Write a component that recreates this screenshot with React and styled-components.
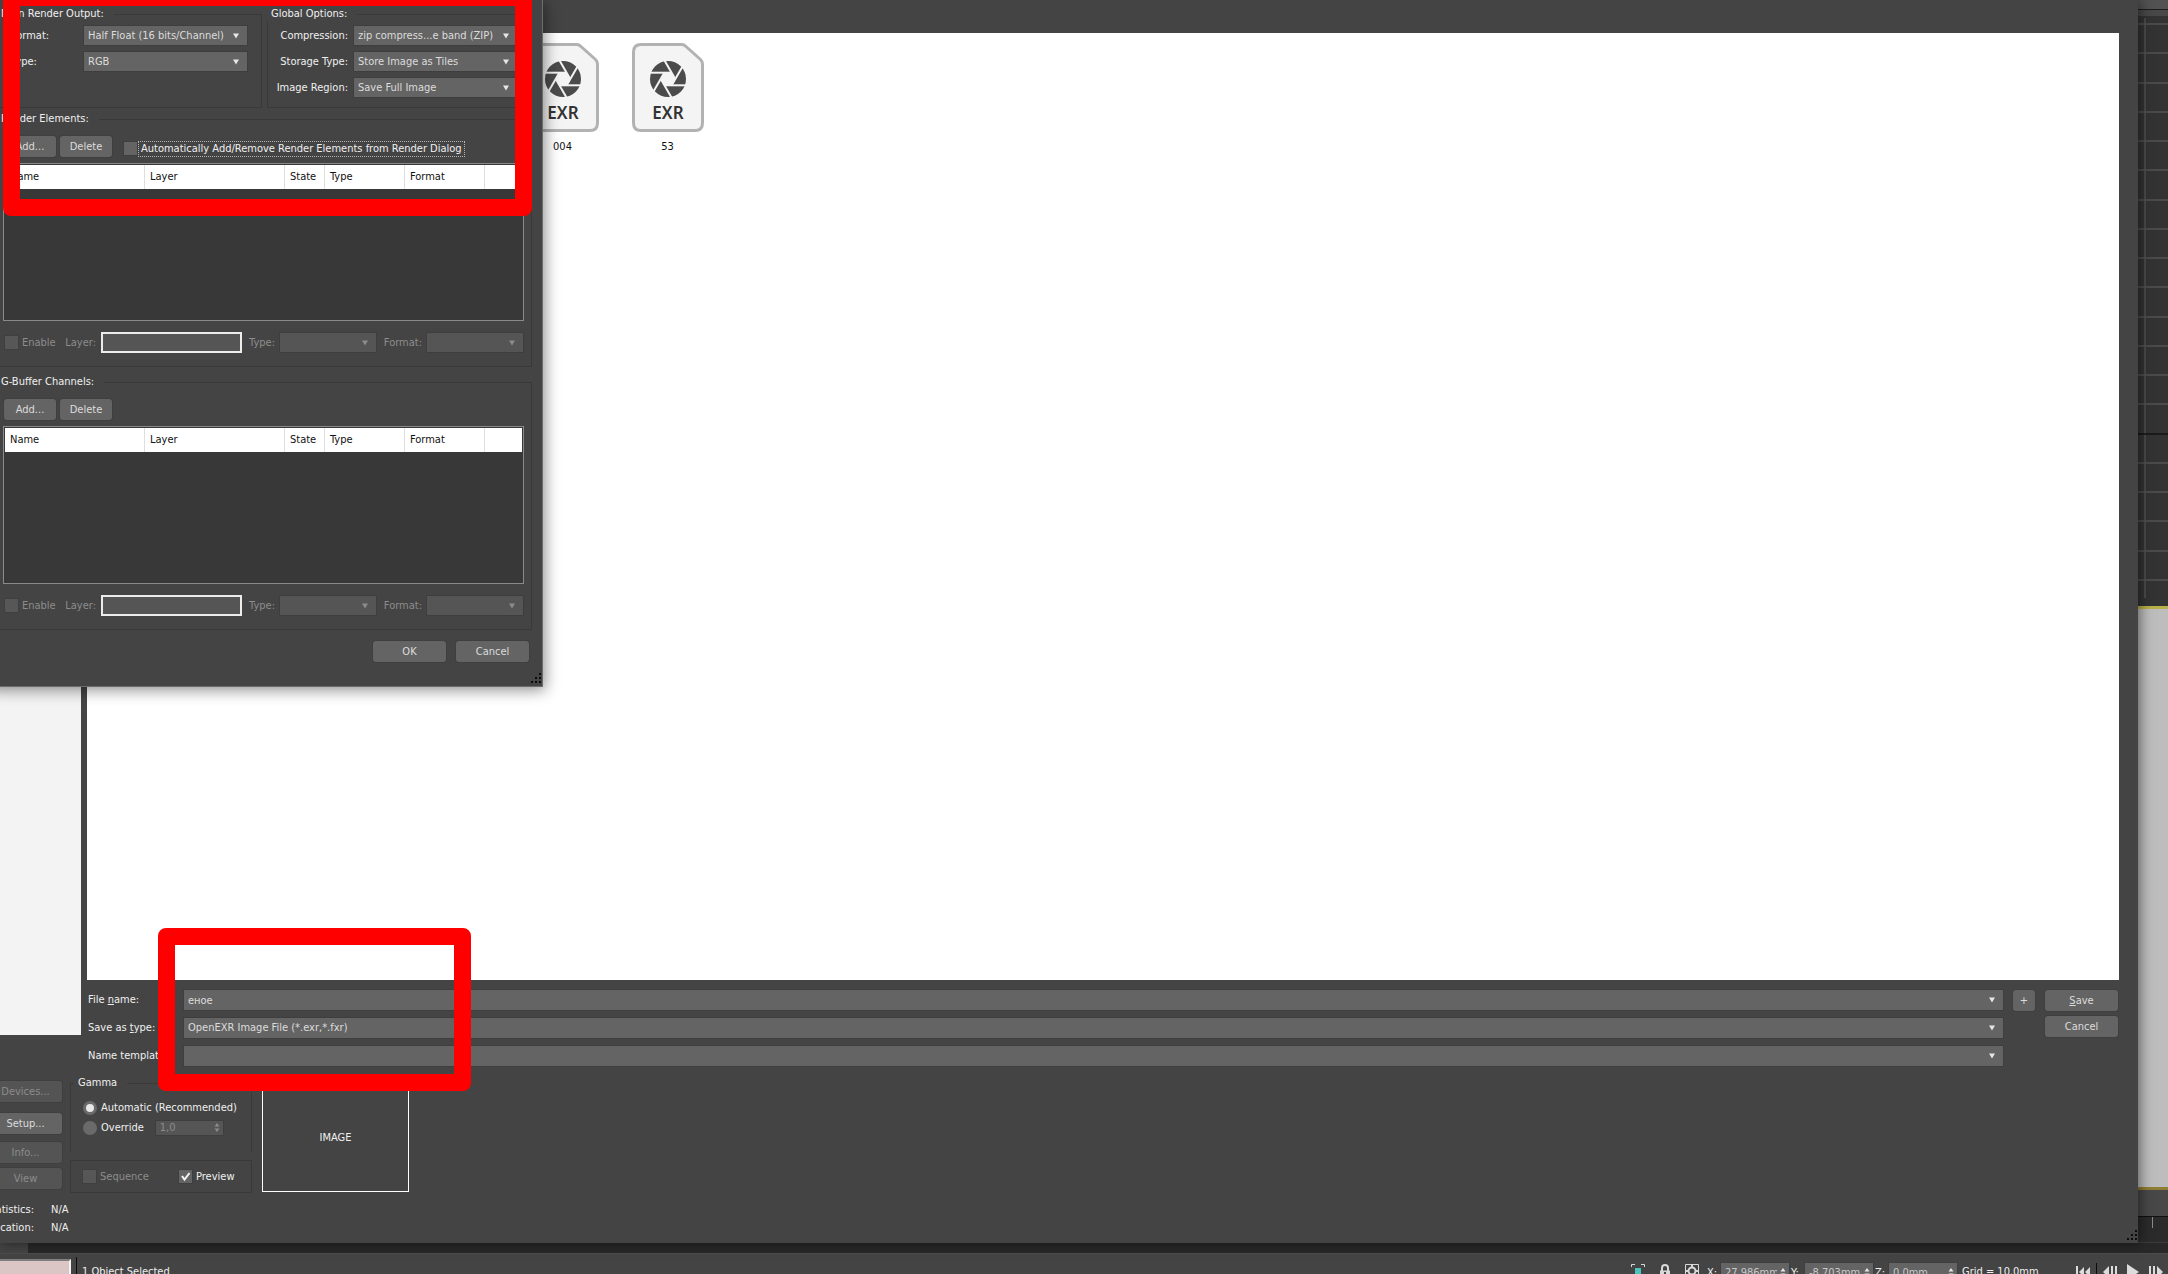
import React, { useState } from "react";
import styled, { createGlobalStyle, css } from "styled-components";

const GlobalStyle = createGlobalStyle`
  * {
    box-sizing: border-box;
  }

  body {
    margin: 0;
    background: #444444;
    color: #f0f0f0;
    overflow: hidden;
  }

  body, button, input, select, table {
    font-family: "DejaVu Sans Condensed", "DejaVu Sans", sans-serif;
    font-stretch: condensed;
    font-size: 11px;
    line-height: 14px;
  }
`;

const Screen = styled.div`
  position: relative;
  display: flex;
  flex-direction: column;
  height: 100vh;
  overflow: hidden;
`;

const Workspace = styled.div`
  display: flex;
  flex: 1;
  min-height: 0;
`;

/* shared controls */

const Button = styled.button`
  width: ${(p) => p.$width || 52}px;
  height: 21px;
  padding: 0;
  border: none;
  border-radius: 3px;
  background: #646464;
  box-shadow: 0 0 0 1px #3f3f3f;
  color: #dcdcdc;

  &:disabled {
    background: #545454;
    color: #8c8c8c;
  }
`;

const ComboWrap = styled.div`
  display: grid;
  height: ${(p) => p.$height || 19}px;
`;

const comboField = css`
  grid-area: 1 / 1;
  width: 100%;
  min-width: 0;
  height: 100%;
  margin: 0;
  padding: 0 20px 0 4px;
  border: none;
  border-radius: 0;
  background: #646464;
  box-shadow: 0 0 0 1px #3e3e3e;
  color: #dcdcdc;
  outline: none;
  appearance: none;

  &:disabled {
    background: #555555;
    opacity: 1;
  }
`;

const SelectField = styled.select`
  ${comboField}
`;

const ComboInput = styled.input`
  ${comboField}
`;

const Arrow = styled.svg`
  grid-area: 1 / 1;
  z-index: 1;
  align-self: center;
  justify-self: end;
  width: 6px;
  height: 6px;
  margin-right: 8px;
  fill: ${(p) => (p.$dim ? "#8c8c8c" : "#e6e6e6")};
  pointer-events: none;
`;

const TextField = styled.input`
  width: 100%;
  min-width: 0;
  height: 21px;
  padding: 0 4px;
  border: 2px solid #ececec;
  background: #555555;
  color: #dcdcdc;
`;

const CheckLabel = styled.label`
  display: flex;
  align-items: center;
  gap: ${(p) => p.$gap || 4}px;
  white-space: nowrap;
  color: ${(p) => (p.$dim ? "#8c8c8c" : "#f0f0f0")};
`;

const TickBox = styled.span`
  display: grid;
  width: 13px;
  height: 13px;
`;

const TickInput = styled.input`
  grid-area: 1 / 1;
  width: 13px;
  height: 13px;
  margin: 0;
  border: none;
  background: #646464;
  box-shadow: 0 0 0 1px #3f3f3f;
  appearance: none;

  &:disabled {
    background: #575757;
  }
`;

const TickMark = styled.svg`
  grid-area: 1 / 1;
  width: 13px;
  height: 13px;
  pointer-events: none;
`;

const FocusText = styled.span`
  padding: 0 2px;
  outline: ${(p) => (p.$focus ? "1px dotted #b4b4b4" : "none")};
`;

const RadioInput = styled.input`
  width: 14px;
  height: 14px;
  margin: 0;
  border: 3px solid #6a6a6a;
  border-radius: 50%;
  background: #6a6a6a;
  appearance: none;

  &:checked {
    background: #e8e8e8;
  }
`;

const Group = styled.fieldset`
  min-width: 0;
  margin: 0;
  padding: ${(p) => p.$pad || "5px 6px 10px 5px"};
  border: 1px solid #393939;
  border-bottom-color: ${(p) => (p.$open ? "transparent" : "#393939")};
`;

const GroupTitle = styled.legend`
  height: 14px;
  margin-left: ${(p) => (p.$wide ? -9 : -6)}px;
  padding: 0 10px 0 4px;
`;

const Label = styled.label`
  color: ${(p) => (p.$dim ? "#8c8c8c" : "#f0f0f0")};
  white-space: nowrap;
`;

/* OpenEXR settings window */

const SettingsWindow = styled.section`
  position: absolute;
  top: 0;
  left: -13px;
  z-index: 5;
  display: flex;
  flex-direction: column;
  width: 556px;
  padding: 7px 10px 24px;
  border-right: 1px solid #6c6c6c;
  border-bottom: 1px solid #6c6c6c;
  background: #444444;
  box-shadow: 2px 3px 14px rgba(0, 0, 0, 0.45);
`;

const OptionColumns = styled.div`
  display: grid;
  grid-template-columns: 1fr 1fr;
  gap: 5px;
  margin-bottom: 4px;
`;

const OptionGrid = styled.div`
  display: grid;
  grid-template-columns: 75px 163px;
  grid-auto-rows: 19px;
  align-items: center;
  gap: 7px 6px;
`;

const LeftLabel = styled(Label)`
  padding-left: 8px;
`;

const RightLabel = styled(Label)`
  text-align: right;
`;

const ChannelGroup = styled(Group)`
  margin-bottom: 8px;
`;

const ButtonRow = styled.div`
  display: flex;
  align-items: center;
  gap: 4px;
  height: 21px;
  margin-bottom: 6px;
  padding-left: 1px;
`;

const AutoCheck = styled.div`
  margin-left: 8px;
  padding-top: 4px;
`;

const ListFrame = styled.div`
  height: 158px;
  margin-bottom: 11px;
  padding: 1px;
  border: 1px solid #8a8a8a;
  background: #383838;
`;

const List = styled.table`
  width: 100%;
  table-layout: fixed;
  border-collapse: separate;
  border-spacing: 0;
`;

const ListHead = styled.th`
  width: ${(p) => (p.$width ? p.$width + "px" : "auto")};
  height: 24px;
  padding: 0 0 0 5px;
  border-right: ${(p) => (p.$width ? "1px solid #dedede" : "none")};
  background: #ffffff;
  color: #111111;
  font-weight: normal;
  text-align: left;
`;

const DetailRow = styled.div`
  display: grid;
  grid-template-columns: 60px 36px 141px 38px 96px 51px 96px;
  align-items: center;
  padding-left: 2px;

  > ${Label} {
    padding-right: 5px;
    text-align: right;
  }
`;

const DialogButtons = styled.div`
  display: flex;
  justify-content: flex-end;
  gap: 10px;
  margin: 3px 3px 0 0;
`;

const Grip = styled.svg`
  position: absolute;
  right: 0;
  bottom: 2px;
  width: 11px;
  height: 11px;
  fill: #0c0c0c;
`;

/* save dialog */

const SaveWindow = styled.main`
  position: relative;
  z-index: 2;
  display: flex;
  flex: 1;
  flex-direction: column;
  min-width: 0;
  background: #444444;
  box-shadow: 2px 0 12px rgba(0, 0, 0, 0.5);
`;

const Browser = styled.div`
  display: flex;
  flex: 1;
  gap: 6px;
  min-height: 0;
  padding-right: 19px;
`;

const Places = styled.aside`
  width: 81px;
  margin-bottom: 31px;
  background: #f3f3f3;
`;

const BrowserMain = styled.div`
  display: flex;
  flex: 1;
  flex-direction: column;
  min-width: 0;
  padding-top: 33px;
`;

const FileArea = styled.ul`
  display: grid;
  flex: 1;
  grid-template-columns: repeat(auto-fill, 105px);
  align-content: start;
  margin: 0;
  padding: 10px 3px;
  background: #ffffff;
  list-style: none;
`;

const FileItem = styled.li`
  display: flex;
  flex-direction: column;
  align-items: center;
  gap: 8px;
  color: #111111;

  &:first-child {
    grid-column-start: 5;
  }
`;

const FileForm = styled.form`
  display: flex;
  align-items: flex-start;
  gap: 10px;
  padding: 10px 0 0 1px;
`;

const Fields = styled.div`
  display: grid;
  flex: 1;
  grid-template-columns: 96px 1fr;
  grid-auto-rows: 20px;
  align-items: center;
  row-gap: 8px;
`;

const FormButtons = styled.div`
  display: flex;
  flex-direction: column;
  gap: 5px;
  padding-right: 1px;
`;

const Footer = styled.div`
  display: flex;
  align-items: flex-start;
  height: 177px;
  padding-top: 10px;
  overflow: hidden;
`;

const SideColumn = styled.div`
  width: 81px;
  margin-left: -11px;
  padding-top: 5px;
`;

const ButtonStack = styled.div`
  display: flex;
  flex-direction: column;
  gap: ${(p) => p.$gap}px;
`;

const Stats = styled.dl`
  display: grid;
  grid-template-columns: 45px auto;
  gap: 4px 17px;
  margin: 14px 0 0;
`;

const StatName = styled.dt`
  display: flex;
  justify-content: flex-end;
`;

const StatValue = styled.dd`
  margin: 0;
`;

const GammaColumn = styled.div`
  display: flex;
  flex-direction: column;
  gap: 7px;
  width: 182px;
`;

const RadioList = styled.div`
  display: flex;
  flex-direction: column;
  gap: 5px;
`;

const RadioRow = styled.div`
  display: flex;
  align-items: center;
  gap: 12px;
  height: 15px;
`;

const SpinWrap = styled.div`
  display: grid;
  width: ${(p) => p.$width}px;
  height: ${(p) => p.$height}px;
`;

const SpinField = styled.input`
  ${comboField}
  padding-right: 12px;
  color: ${(p) => (p.disabled ? "#8c8c8c" : "#c8c8c8")};
`;

const SpinArrows = styled(Arrow)`
  height: 9px;
  margin-right: 3px;
`;

const ToggleBox = styled.div`
  display: grid;
  grid-template-columns: 96px auto;
  align-items: center;
  height: 33px;
  padding: 0 12px;
  border: 1px solid #393939;
`;

const ImagePreview = styled.div`
  display: flex;
  align-items: center;
  justify-content: center;
  width: 147px;
  height: 109px;
  margin: 7px 0 0 10px;
  border: 1px solid #ffffff;
`;

/* application behind the dialogs */

const Viewports = styled.div`
  display: flex;
  flex-direction: column;
  width: 30px;
  background: #484848;
`;

const ViewToolbar = styled.div`
  height: 10px;
  margin-bottom: 6px;
  border-bottom: 1px solid #1c1c1c;
  background: #525252;
`;

const WireView = styled.svg`
  width: 100%;
  height: 590px;
  background: #333333;
`;

const ShadedView = styled.div`
  flex: 1;
  border-top: 3px solid #b9b04a;
  border-bottom: 3px solid #8f7d33;
  background: #bdbdbd;
`;

const TimeTrack = styled.div`
  height: 27px;
  margin-top: 26px;
  padding-left: 14px;
  border-top: 1px solid #101010;
  border-bottom: 1px solid #3c3c3c;
  background: #2b2b2b;
`;

const TimeTick = styled.div`
  width: 1px;
  height: 11px;
  background: #8a8a8a;
`;

const TrackBar = styled.div`
  height: 10px;
  margin-left: 28px;
  background: #282828;
`;

const StatusBar = styled.footer`
  display: flex;
  align-items: flex-start;
  height: 21px;
  border-top: 1px solid #4c4c4c;
  overflow: hidden;
`;

const Listener = styled.div`
  width: 71px;
  height: 30px;
  margin-top: 5px;
  border-top: 2px solid #808080;
  border-right: 2px solid #f4f4f4;
  background: #dcc5c5;
`;

const StatusText = styled.span`
  margin: 3px auto 0 5px;
  padding: 8px 0 0 5px;
  border-left: 1px solid #0c0c0c;
  white-space: nowrap;
`;

const StatusIcons = styled.div`
  display: flex;
  gap: 13px;
  margin: 10px 8px 0 0;
`;

const StatusIcon = styled.svg`
  width: 14px;
  height: 16px;
  fill: none;
  stroke: #d8d8d8;
`;

const Coordinate = styled.div`
  display: grid;
  grid-template-columns: 14px 68px;
  margin: 9px 2px 0 0;

  > ${Label} {
    padding-top: 3px;
  }
`;

const GridText = styled.span`
  width: 117px;
  padding: 11px 0 0 3px;
  white-space: nowrap;
`;

const Playback = styled.div`
  display: flex;
  gap: 9px;
  margin: 9px 5px 0 0;
`;

const PlayButton = styled.button`
  display: flex;
  width: 14px;
  height: 20px;
  padding: 0;
  border: none;
  background: none;

  svg {
    width: 14px;
    height: 18px;
    fill: #dcdcdc;
  }
`;

const PlayDivider = styled.div`
  width: 1px;
  height: 20px;
  margin: 0 -3px;
  background: #0c0c0c;
`;

/* red highlight drawn over the dialogs */

const Highlight = styled.div`
  position: absolute;
  z-index: 10;
  top: ${(p) => p.$top}px;
  left: ${(p) => p.$left}px;
  width: ${(p) => p.$width}px;
  height: ${(p) => p.$height}px;
  border: 17px solid #ff0000;
  border-radius: 8px;
  pointer-events: none;
`;

const columns = [
  { title: "Name", width: 140 },
  { title: "Layer", width: 140 },
  { title: "State", width: 40 },
  { title: "Type", width: 80 },
  { title: "Format", width: 80 },
];

const files = ["004", "53"];

const coordinates = [
  { axis: "X", value: "27.986mm" },
  { axis: "Y", value: "-8.703mm" },
  { axis: "Z", value: "0.0mm" },
];

function DownArrow({ dim }) {
  return (
    <Arrow viewBox="0 0 6 6" $dim={dim} aria-hidden="true">
      <path d="M0 0.5h6L3 5.5z" />
    </Arrow>
  );
}

function Select({ id, value, disabled, height }) {
  return (
    <ComboWrap $height={height}>
      <SelectField id={id} disabled={disabled}>
        <option>{value}</option>
      </SelectField>
      <DownArrow dim={disabled} />
    </ComboWrap>
  );
}

function Combo({ id, value }) {
  return (
    <ComboWrap $height={20}>
      <ComboInput id={id} type="text" defaultValue={value} />
      <DownArrow />
    </ComboWrap>
  );
}

function Check({ text, disabled, initial = false, focus }) {
  const [checked, setChecked] = useState(initial);

  return (
    <CheckLabel $dim={disabled} $gap={2}>
      <TickBox>
        <TickInput
          type="checkbox"
          disabled={disabled}
          checked={checked}
          onChange={() => setChecked((prev) => !prev)}
        />
        {checked && (
          <TickMark viewBox="0 0 13 13">
            <path d="M3 6l2.5 3.5L10.5 3" fill="none" stroke="#f4f4f4" strokeWidth="2" />
          </TickMark>
        )}
      </TickBox>
      <FocusText $focus={focus}>{text}</FocusText>
    </CheckLabel>
  );
}

function Spinner({ id, value, width, height, disabled }) {
  return (
    <SpinWrap $width={width} $height={height}>
      <SpinField id={id} type="text" defaultValue={value} disabled={disabled} />
      <SpinArrows viewBox="0 0 6 9" $dim={disabled}>
        <path d="M0.5 3.5h5L3 0zM0.5 5.5h5L3 9z" />
      </SpinArrows>
    </SpinWrap>
  );
}

function ResizeGrip() {
  return (
    <Grip viewBox="0 0 11 11">
      <path d="M8 0h2v2h-2zM4 4h2v2h-2zM8 4h2v2h-2zM0 8h2v2h-2zM4 8h2v2h-2zM8 8h2v2h-2z" />
    </Grip>
  );
}

function ExrIcon() {
  return (
    <svg width="72" height="89" viewBox="0 0 72 89">
      <path
        d="M9 1.5H50Q52 1.5 54 3.5L68.5 16.5Q70.5 18.5 70.5 21V80Q70.5 87.5 63 87.5H9Q1.5 87.5 1.5 80V9Q1.5 1.5 9 1.5Z"
        fill="#f4f4f4"
        stroke="#b2b2b2"
        strokeWidth="3"
      />
      <g transform="translate(36 36)">
        <circle r="18" fill="#4b4b4b" />
        <path d="M-3.5 -6H3.5L7 0L3.5 6H-3.5L-7 0Z" fill="#f4f4f4" />
        {[0, 60, 120, 180, 240, 300].map((a) => (
          <path key={a} d="M3.5 -6.3H-19" stroke="#f4f4f4" strokeWidth="2" transform={`rotate(${a})`} />
        ))}
      </g>
      <text
        x="36"
        y="76"
        textAnchor="middle"
        fontFamily="Noto Sans, sans-serif"
        fontSize="17"
        fontWeight="600"
        fill="#333333"
      >
        EXR
      </text>
    </svg>
  );
}

function ChannelList({ id, title, children }) {
  return (
    <ChannelGroup $pad="10px 7px 13px 5px">
      <GroupTitle>{title}</GroupTitle>
      <ButtonRow>
        <Button type="button">Add...</Button>
        <Button type="button">Delete</Button>
        {children}
      </ButtonRow>
      <ListFrame>
        <List>
          <thead>
            <tr>
              {columns.map((c) => (
                <ListHead key={c.title} $width={c.width} scope="col">
                  {c.title}
                </ListHead>
              ))}
              <ListHead />
            </tr>
          </thead>
        </List>
      </ListFrame>
      <DetailRow>
        <Check text="Enable" disabled />
        <Label $dim htmlFor={id + "-layer"}>Layer:</Label>
        <TextField id={id + "-layer"} type="text" disabled />
        <Label $dim htmlFor={id + "-type"}>Type:</Label>
        <Select id={id + "-type"} value="" disabled />
        <Label $dim htmlFor={id + "-format"}>Format:</Label>
        <Select id={id + "-format"} value="" disabled />
      </DetailRow>
    </ChannelGroup>
  );
}

function ExrSettings() {
  return (
    <SettingsWindow>
      <OptionColumns>
        <Group>
          <GroupTitle>Main Render Output:</GroupTitle>
          <OptionGrid>
            <LeftLabel htmlFor="format">Format:</LeftLabel>
            <Select id="format" value="Half Float (16 bits/Channel)" />
            <LeftLabel htmlFor="type">Type:</LeftLabel>
            <Select id="type" value="RGB" />
          </OptionGrid>
        </Group>
        <Group>
          <GroupTitle>Global Options:</GroupTitle>
          <OptionGrid>
            <RightLabel htmlFor="compression">Compression:</RightLabel>
            <Select id="compression" value="zip compress...e band (ZIP)" />
            <RightLabel htmlFor="storage">Storage Type:</RightLabel>
            <Select id="storage" value="Store Image as Tiles" />
            <RightLabel htmlFor="region">Image Region:</RightLabel>
            <Select id="region" value="Save Full Image" />
          </OptionGrid>
        </Group>
      </OptionColumns>
      <ChannelList id="elements" title="Render Elements:">
        <AutoCheck>
          <Check text="Automatically Add/Remove Render Elements from Render Dialog" focus />
        </AutoCheck>
      </ChannelList>
      <ChannelList id="gbuffer" title="G-Buffer Channels:" />
      <DialogButtons>
        <Button type="button" $width={73}>OK</Button>
        <Button type="button" $width={73}>Cancel</Button>
      </DialogButtons>
      <ResizeGrip />
    </SettingsWindow>
  );
}

function SaveDialog() {
  const [gamma, setGamma] = useState("auto");

  return (
    <SaveWindow>
      <Browser>
        <Places />
        <BrowserMain>
          <FileArea>
            {files.map((name) => (
              <FileItem key={name}>
                <ExrIcon />
                {name}
              </FileItem>
            ))}
          </FileArea>
          <FileForm>
            <Fields>
              <Label htmlFor="file-name">File <u>n</u>ame:</Label>
              <Combo id="file-name" value="еное" />
              <Label htmlFor="save-type">Save as <u>t</u>ype:</Label>
              <Select id="save-type" height={20} value="OpenEXR Image File (*.exr,*.fxr)" />
              <Label htmlFor="template">Name template:</Label>
              <Combo id="template" value="" />
            </Fields>
            <Button type="button" $width={22}>+</Button>
            <FormButtons>
              <Button type="button" $width={73}><u>S</u>ave</Button>
              <Button type="button" $width={73}>Cancel</Button>
            </FormButtons>
          </FileForm>
        </BrowserMain>
      </Browser>
      <Footer>
        <SideColumn>
          <ButtonStack $gap={8}>
            <ButtonStack $gap={11}>
              <Button type="button" $width={73} disabled>Devices...</Button>
              <Button type="button" $width={73}>Setup...</Button>
            </ButtonStack>
            <ButtonStack $gap={5}>
              <Button type="button" $width={73} disabled>Info...</Button>
              <Button type="button" $width={73} disabled>View</Button>
            </ButtonStack>
          </ButtonStack>
          <Stats>
            <StatName>Statistics:</StatName>
            <StatValue>N/A</StatValue>
            <StatName>Location:</StatName>
            <StatValue>N/A</StatValue>
          </Stats>
        </SideColumn>
        <GammaColumn>
          <Group $open $pad="10px 6px 17px 12px">
            <GroupTitle $wide>Gamma</GroupTitle>
            <RadioList>
              <RadioRow>
                <CheckLabel>
                  <RadioInput
                    type="radio"
                    name="gamma"
                    checked={gamma === "auto"}
                    onChange={() => setGamma("auto")}
                  />
                  Automatic (Recommended)
                </CheckLabel>
              </RadioRow>
              <RadioRow>
                <CheckLabel>
                  <RadioInput
                    type="radio"
                    name="gamma"
                    checked={gamma === "override"}
                    onChange={() => setGamma("override")}
                  />
                  Override
                </CheckLabel>
                <Spinner id="gamma-value" value="1,0" width={67} height={14} disabled />
              </RadioRow>
            </RadioList>
          </Group>
          <ToggleBox>
            <Check text="Sequence" disabled />
            <Check text="Preview" initial={true} />
          </ToggleBox>
        </GammaColumn>
        <ImagePreview>IMAGE</ImagePreview>
      </Footer>
      <ResizeGrip />
    </SaveWindow>
  );
}

function ViewportStrip() {
  const lines = Array.from({ length: 20 }, (_, i) => Math.round(8 + i * 29.25));

  return (
    <Viewports>
      <ViewToolbar />
      <WireView>
        <path d="M7 2V582" stroke="#555555" strokeWidth="1.5" />
        {lines.map((y, i) => (
          <path
            key={y}
            d={`M0 ${y}H30`}
            stroke={i === 14 ? "#141414" : "#555555"}
            strokeWidth="1.5"
          />
        ))}
      </WireView>
      <ShadedView />
      <TimeTrack>
        <TimeTick />
      </TimeTrack>
    </Viewports>
  );
}

function Status() {
  return (
    <StatusBar>
      <Listener />
      <StatusText>1 Object Selected</StatusText>
      <StatusIcons>
        <StatusIcon viewBox="0 0 14 16">
          <path d="M0.5 3V0.5H4M10 0.5H13.5V3" />
          <path d="M4 4h6v7h-6z" fill="#4cc4bc" stroke="none" />
        </StatusIcon>
        <StatusIcon viewBox="0 0 14 16">
          <path d="M4 7V4a3 3 0 0 1 6 0v3" strokeWidth="2" />
          <path d="M2 6.5h10v8h-10z" fill="#d8d8d8" stroke="none" />
          <path d="M7 8v4" stroke="#444444" strokeWidth="2" />
        </StatusIcon>
        <StatusIcon viewBox="0 0 14 16">
          <path d="M0.5 0.5h13v13h-13z" />
          <circle cx="7" cy="7" r="3.5" strokeWidth="2" />
          <path d="M7 1v3M7 10v3M1 7h3M10 7h3" strokeWidth="2" />
        </StatusIcon>
      </StatusIcons>
      {coordinates.map(({ axis, value }) => (
        <Coordinate key={axis}>
          <Label htmlFor={"axis-" + axis}>{axis}:</Label>
          <Spinner id={"axis-" + axis} value={value} width={68} height={19} />
        </Coordinate>
      ))}
      <GridText>Grid = 10.0mm</GridText>
      <Playback>
        <PlayButton type="button" aria-label="Go to start">
          <svg viewBox="0 0 14 18">
            <path d="M0 3h2v12h-2zM8 4v10L3 9zM14 4v10L9 9z" />
          </svg>
        </PlayButton>
        <PlayDivider />
        <PlayButton type="button" aria-label="Previous frame">
          <svg viewBox="0 0 14 18">
            <path d="M6 3v12L0 9zM8 3h2v12h-2zM12 3h2v12h-2z" />
          </svg>
        </PlayButton>
        <PlayButton type="button" aria-label="Play">
          <svg viewBox="0 0 14 18">
            <path d="M1 1l12 8L1 17z" />
          </svg>
        </PlayButton>
        <PlayButton type="button" aria-label="Next frame">
          <svg viewBox="0 0 14 18">
            <path d="M0 3h2v12h-2zM4 3h2v12h-2zM8 3l6 6l-6 6z" />
          </svg>
        </PlayButton>
      </Playback>
    </StatusBar>
  );
}

function App() {
  return (
    <>
      <GlobalStyle />
      <Screen>
        <Workspace>
          <SaveDialog />
          <ViewportStrip />
        </Workspace>
        <TrackBar />
        <Status />
        <ExrSettings />
        <Highlight $top={-11} $left={3} $width={529} $height={227} />
        <Highlight $top={928} $left={158} $width={313} $height={163} />
      </Screen>
    </>
  );
}

export default App;
